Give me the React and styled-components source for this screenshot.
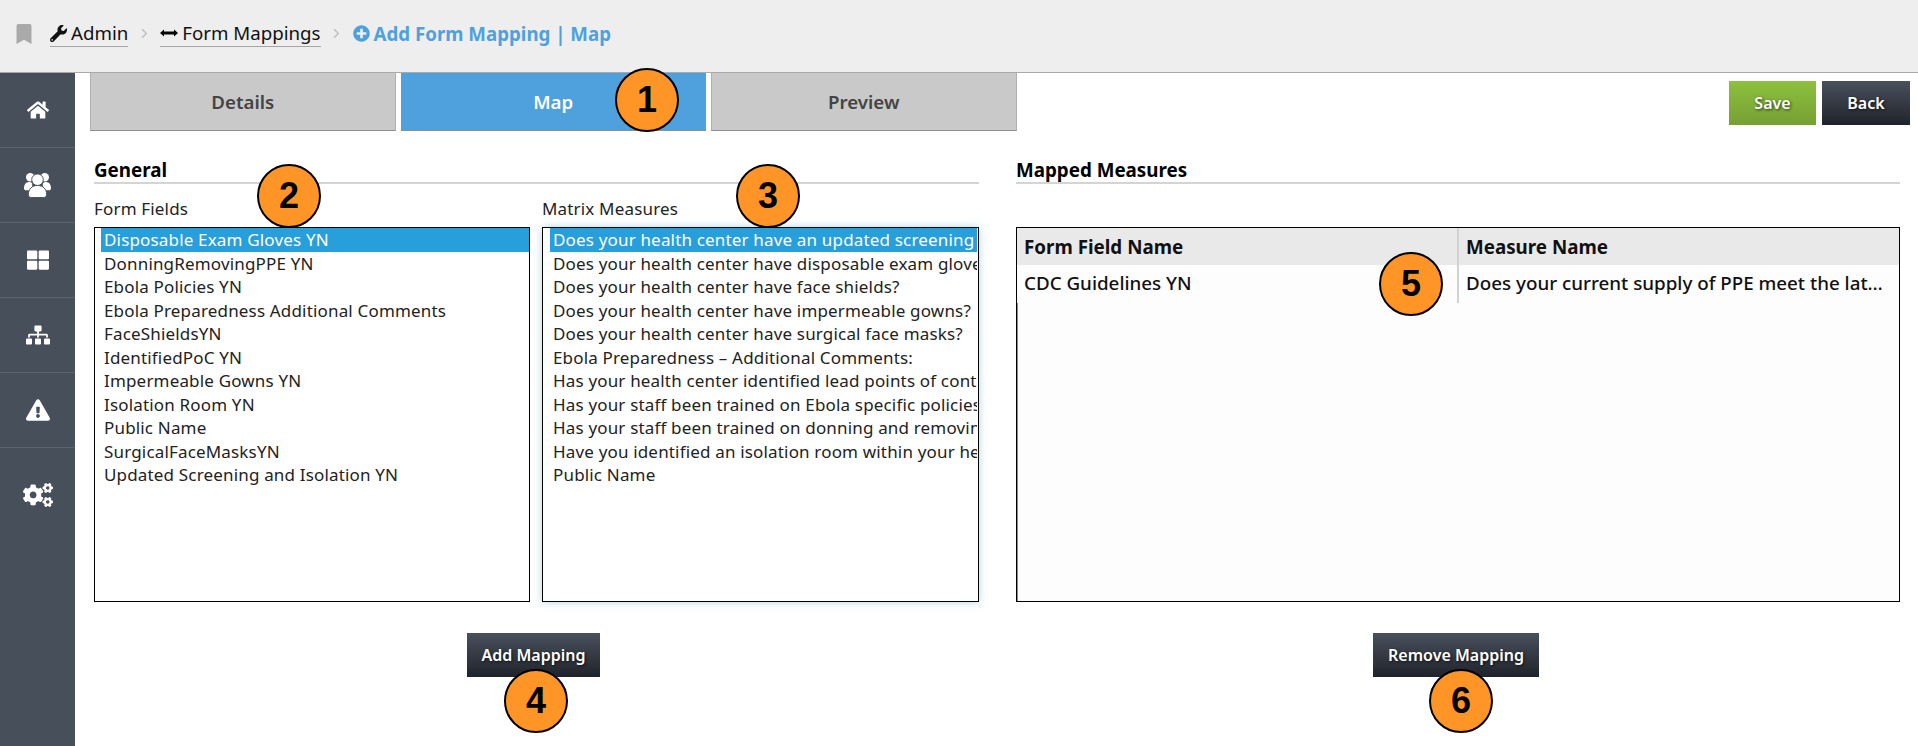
import React from 'react';
import styled, { createGlobalStyle } from 'styled-components';
import {
  FaBookmark, FaWrench, FaPlusCircle, FaHome, FaThLarge, FaSitemap,
  FaExclamationTriangle, FaCogs, FaChevronRight,
} from 'react-icons/fa';

const GlobalStyle = createGlobalStyle`
  html, body { margin: 0; padding: 0; background: #fff; }
  body { font-family: "Noto Sans", "Open Sans", sans-serif; color: #111; overflow: hidden; }
`;

const Page = styled.div`
  position: relative;
  width: 1918px;
  height: 746px;
  display: flex;
  flex-direction: column;
  overflow: hidden;
`;

const TopBar = styled.header`
  height: 73px;
  flex: none;
  box-sizing: border-box;
  background: #eeeeee;
  border-bottom: 1px solid #a9a9a9;
  display: flex;
  align-items: center;
  padding: 0 0 5px 14px;
`;

const Crumb = styled.a`
  display: flex;
  align-items: center;
  gap: 4px;
  height: 25px;
  font-size: 18.7px;
  line-height: 24px;
  color: #111;
  border-bottom: 1px solid #a5a5a5;
`;

const CurrentCrumb = styled.span`
  display: flex;
  align-items: center;
  gap: 4px;
  font-size: 18.7px;
  font-weight: 700;
  color: #4fa1de;
  height: 25px;
  line-height: 24px;
`;

const Separator = styled.span`
  display: flex;
  width: 32px;
  justify-content: center;
  color: #c4c4c4;
  font-size: 11px;
`;

const Body = styled.div`
  flex: 1;
  display: flex;
  min-height: 0;
`;

const Sidebar = styled.nav`
  width: 75px;
  flex: none;
  background: #474f5a;
  display: flex;
  flex-direction: column;
`;

const NavItem = styled.div`
  height: ${(p) => (p.$tall ? 94 : 74)}px;
  flex: none;
  display: flex;
  align-items: center;
  justify-content: center;
  color: #fff;
  font-size: ${(p) => p.$size || 22}px;
  border-bottom: 1px solid #5b636e;
  &:last-child { border-bottom: none; }
`;

const Content = styled.main`
  flex: 1;
  min-width: 0;
  padding: 0 8px 0 15px;
`;

const TabRow = styled.div`
  height: 58px;
  display: flex;
  gap: 5px;
`;

const Tab = styled.div`
  width: 305.5px;
  box-sizing: border-box;
  display: flex;
  align-items: center;
  justify-content: center;
  font-size: 18.7px;
  font-weight: 600;
  background: ${(p) => (p.$active ? '#4fa1de' : '#c9c9c9')};
  color: ${(p) => (p.$active ? '#fff' : '#444')};
  border: 1px solid ${(p) => (p.$active ? '#4fa1de' : '#b0b0b0')};
  border-top: none;
  border-bottom: 1px solid #8f8f8f;
`;

const Actions = styled.div`
  margin-left: auto;
  padding-top: 8px;
  display: flex;
  gap: 6px;
  align-items: flex-start;
`;

const Button = styled.button`
  height: 44px;
  width: ${(p) => p.$width}px;
  padding: 0;
  border: none;
  font-family: inherit;
  font-size: 16px;
  font-weight: 600;
  color: #fff;
  text-shadow: 1px 1px 3px rgba(0, 0, 0, 0.7);
  background: ${(p) => (p.$green
    ? 'linear-gradient(#8cc13e, #76a033)'
    : 'linear-gradient(#4a515d, #1f232b)')};
`;

const Columns = styled.div`
  display: grid;
  grid-template-columns: 885px 884px;
  gap: 37px;
  padding: 28px 0 0 4px;
`;

const Section = styled.section`
  display: flex;
  flex-direction: column;
`;

const Heading = styled.h2`
  margin: 0;
  height: 22px;
  padding-top: 1px;
  box-sizing: content-box;
  font-size: 18.8px;
  line-height: 20px;
  font-weight: 700;
  color: #000;
  border-bottom: 2px solid #d4d4d4;
`;

const Fields = styled.div`
  display: grid;
  grid-template-columns: 436px 437px;
  gap: 12px;
`;

const Label = styled.div`
  height: 43px;
  box-sizing: border-box;
  padding-top: 14px;
  font-size: 17px;
  letter-spacing: 0.17px;
  line-height: 22px;
  color: #222;
`;

const ListBox = styled.div`
  height: 375px;
  box-sizing: border-box;
  border: 1px solid #000;
  padding: 0 ${(p) => (p.$focused ? 1 : 0)}px 0 ${(p) => (p.$focused ? 7 : 6)}px;
  overflow: hidden;
  background: #fff;
  box-shadow: ${(p) => (p.$focused ? '0 0 8px rgba(82, 168, 200, 0.45)' : 'none')};
`;

const Option = styled.div`
  height: 23.5px;
  line-height: 23.5px;
  padding-left: 3px;
  font-size: 17px;
  letter-spacing: 0.17px;
  white-space: nowrap;
  overflow: hidden;
  color: ${(p) => (p.$selected ? '#fff' : '#222')};
  background: ${(p) => (p.$selected ? '#279fdb' : 'transparent')};
`;

const Footer = styled.div`
  display: flex;
  justify-content: center;
  padding: 31px ${(p) => p.$inset}px 0 0;
`;

const TableBox = styled.div`
  height: 375px;
  box-sizing: border-box;
  border: 1px solid #000;
  background: #fdfdfd;
  display: flex;
  flex-direction: column;
`;

const TableRow = styled.div`
  display: grid;
  grid-template-columns: 440px 1fr;
  height: ${(p) => (p.$head ? 37 : 38)}px;
  flex: none;
  background: ${(p) => (p.$head ? '#e9e9e9' : '#fdfdfd')};
`;

const TableRest = styled.div`
  flex: 1;
  border-left: 1px solid #8a8a8a;
`;

const Cell = styled.div`
  display: flex;
  align-items: center;
  min-width: 0;
  padding: 0 7px ${(p) => (p.$head ? 0 : 2)}px 7px;
  font-size: 18.8px;
  font-weight: ${(p) => (p.$head ? 700 : 500)};
  color: #111;
  border-left: ${(p) => (p.$divider ? '2px solid #d2d2d2' : 'none')};
`;

const CellText = styled.span`
  white-space: nowrap;
  overflow: hidden;
  text-overflow: ellipsis;
`;

const Badge = styled.div`
  position: absolute;
  left: ${(p) => p.$x - 32}px;
  top: ${(p) => p.$y - 32}px;
  width: 64px;
  height: 64px;
  box-sizing: border-box;
  border: 2px solid #000;
  border-radius: 50%;
  background: #ff9527;
  color: #000;
  display: flex;
  align-items: center;
  justify-content: center;
  font-family: "Liberation Sans", Arial, sans-serif;
  font-size: 36px;
  font-weight: 700;
`;

const LongArrow = () => (
  <svg width="18" height="10" viewBox="0 0 18 10" aria-hidden="true">
    <path d="M0 5 L4 1.5 V3.6 H14 V1.5 L18 5 L14 8.5 V6.4 H4 V8.5 Z" fill="#000" />
  </svg>
);

const UsersIcon = () => (
  <svg width="27" height="26" viewBox="0 0 28 26" fill="#fff" aria-hidden="true">
    <circle cx="6.5" cy="5" r="4.4" />
    <circle cx="21.5" cy="5" r="4.4" />
    <path d="M0 16c0-3 2-6 5-6 1.200 0 2.500.5 3.500 1.200V18.500H2c-1.200 0-2-1-2-2.500z" />
    <path d="M28 16c0-3-2-6-5-6-1.200 0-2.500.5-3.500 1.200V18.500H26c1.200 0 2-1 2-2.500z" />
    <circle cx="14" cy="7.500" r="6" stroke="#474f5a" strokeWidth="1" />
    <path d="M4.500 23c0-6 4-9.500 9.500-9.500s9.500 3.500 9.500 9.500c0 2-1.500 3-3.500 3H8c-2 0-3.500-1-3.500-3z" stroke="#474f5a" strokeWidth="1" />
  </svg>
);

const formFields = [
  'Disposable Exam Gloves YN',
  'DonningRemovingPPE YN',
  'Ebola Policies YN',
  'Ebola Preparedness Additional Comments',
  'FaceShieldsYN',
  'IdentifiedPoC YN',
  'Impermeable Gowns YN',
  'Isolation Room YN',
  'Public Name',
  'SurgicalFaceMasksYN',
  'Updated Screening and Isolation YN',
];

const measures = [
  'Does your health center have an updated screening and isolation protocol?',
  'Does your health center have disposable exam gloves?',
  'Does your health center have face shields?',
  'Does your health center have impermeable gowns?',
  'Does your health center have surgical face masks?',
  'Ebola Preparedness – Additional Comments:',
  'Has your health center identified lead points of contact?',
  'Has your staff been trained on Ebola specific policies?',
  'Has your staff been trained on donning and removing PPE?',
  'Have you identified an isolation room within your health center?',
  'Public Name',
];

const badges = [
  [1, 647, 100], [2, 289, 196], [3, 768, 196], [4, 536, 701], [5, 1411, 284], [6, 1461, 701],
];

export default function App() {
  return (
    <Page>
      <GlobalStyle />
      <TopBar>
        <FaBookmark color="#a9a9a9" size={20} style={{ marginRight: 16 }} />
        <Crumb><FaWrench size={17} /> Admin</Crumb>
        <Separator><FaChevronRight /></Separator>
        <Crumb><LongArrow /> Form Mappings</Crumb>
        <Separator><FaChevronRight /></Separator>
        <CurrentCrumb><FaPlusCircle size={17} /> Add Form Mapping | Map</CurrentCrumb>
      </TopBar>
      <Body>
        <Sidebar>
          <NavItem><FaHome /></NavItem>
          <NavItem><UsersIcon /></NavItem>
          <NavItem><FaThLarge /></NavItem>
          <NavItem $size={24}><FaSitemap /></NavItem>
          <NavItem $size={24}><FaExclamationTriangle /></NavItem>
          <NavItem $size={30} $tall><FaCogs /></NavItem>
        </Sidebar>
        <Content>
          <TabRow>
            <Tab>Details</Tab>
            <Tab $active>Map</Tab>
            <Tab>Preview</Tab>
            <Actions>
              <Button $green $width={87}>Save</Button>
              <Button $width={88}>Back</Button>
            </Actions>
          </TabRow>
          <Columns>
            <Section>
              <Heading>General</Heading>
              <Fields>
                <div>
                  <Label>Form Fields</Label>
                  <ListBox>
                    {formFields.map((f, i) => <Option key={f} $selected={i === 0}>{f}</Option>)}
                  </ListBox>
                </div>
                <div>
                  <Label>Matrix Measures</Label>
                  <ListBox $focused>
                    {measures.map((m, i) => <Option key={m} $selected={i === 0}>{m}</Option>)}
                  </ListBox>
                </div>
              </Fields>
              <Footer $inset={6}><Button $width={133}>Add Mapping</Button></Footer>
            </Section>
            <Section>
              <Heading>Mapped Measures</Heading>
              <Label />
              <TableBox>
                <TableRow $head>
                  <Cell $head>Form Field Name</Cell>
                  <Cell $head $divider>Measure Name</Cell>
                </TableRow>
                <TableRow>
                  <Cell>CDC Guidelines YN</Cell>
                  <Cell $divider>
                    <CellText>Does your current supply of PPE meet the latest CDC guidelines for Ebola?</CellText>
                  </Cell>
                </TableRow>
                <TableRest />
              </TableBox>
              <Footer $inset={4}><Button $width={166}>Remove Mapping</Button></Footer>
            </Section>
          </Columns>
        </Content>
      </Body>
      {badges.map(([n, x, y]) => <Badge key={n} $x={x} $y={y}>{n}</Badge>)}
    </Page>
  );
}
